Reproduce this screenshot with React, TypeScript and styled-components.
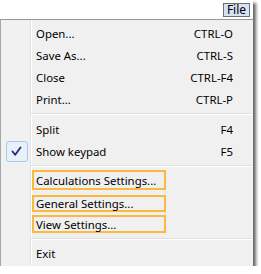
import React from "react";
import styled, { createGlobalStyle } from "styled-components";

const Global = createGlobalStyle`
  html, body { margin: 0; padding: 0; background: #ffffff; }
  body { font-family: "Noto Sans", "Open Sans", Arial, sans-serif; }
`;

const Shot = styled.div`
  width: 253px;
  background: #ffffff;
  box-shadow: 3px 3px 3px rgba(0, 0, 0, 0.6);
  display: flex;
  flex-direction: column;
`;

const TopStrip = styled.div`
  height: 19px;
  display: flex;
  justify-content: flex-end;
  align-items: flex-start;
  padding: 3px 3px 0 0;
  box-sizing: border-box;
`;

const FileButton = styled.div`
  width: 27px;
  height: 14px;
  box-sizing: border-box;
  border: 1px solid #6f6f6f;
  background: #d6e3f5;
  font-size: 12px;
  line-height: 12px;
  color: #000;
  display: flex;
  align-items: center;
  justify-content: center;
`;

const Menu = styled.div`
  border-top: 1px solid #979797;
  border-left: 1px solid #a7a7a7;
  padding: 2px 0 2px 0;
  display: flex;
  flex-direction: column;
  background: linear-gradient(
    to right,
    #f1f1f1 0 29px,
    #e2e3e3 29px 30px,
    #ffffff 30px 31px,
    #f0f0f0 31px
  );
`;

const Item = styled.div`
  height: 22px;
  display: grid;
  grid-template-columns: 30px 1fr auto;
  align-items: center;
  padding-right: 20px;
  font-size: 11.4px;
  color: #000;
`;

const Gutter = styled.div`
  height: 22px;
  display: flex;
  align-items: center;
  justify-content: center;
  padding-left: 1px;
`;

const CheckBox = styled.div`
  width: 22px;
  height: 21px;
  box-sizing: border-box;
  border: 1px solid #a9c7ea;
  border-radius: 3px;
  background: #e8f0fa;
  display: flex;
  align-items: center;
  justify-content: center;
`;

const Label = styled.div`
  padding-left: 5px;
  height: 22px;
  display: flex;
  align-items: center;
  white-space: nowrap;
`;

const Shortcut = styled.div`
  white-space: nowrap;
`;

const Highlight = styled.span<{ $top: number; $h: number }>`
  align-self: flex-start;
  margin-top: ${(p) => p.$top}px;
  margin-left: -4px;
  height: ${(p) => p.$h}px;
  width: 134px;
  box-sizing: border-box;
  border: 2px solid #fbb940;
  padding-left: 2px;
  display: flex;
  align-items: center;
`;

const Separator = styled.div<{ $h: number }>`
  height: ${(p) => p.$h}px;
  margin-left: 30px;
  display: flex;
  flex-direction: column;
  justify-content: center;
  &::before {
    content: "";
    height: 1px;
    background: #e0e0e0;
  }
  &::after {
    content: "";
    height: 1px;
    background: #ffffff;
  }
`;

const Check = () => (
  <svg width="11" height="11" viewBox="0 0 11 11">
    <path
      d="M1.5 5.5 L4.2 8.8 L9.5 1.5"
      fill="none"
      stroke="#1b2a80"
      strokeWidth="1.8"
      strokeLinecap="round"
      strokeLinejoin="round"
    />
  </svg>
);

type Row = {
  label: string;
  shortcut?: string;
  checked?: boolean;
  box?: { top: number; h: number };
};

const group1: Row[] = [
  { label: "Open...", shortcut: "CTRL-O" },
  { label: "Save As...", shortcut: "CTRL-S" },
  { label: "Close", shortcut: "CTRL-F4" },
  { label: "Print...", shortcut: "CTRL-P" },
];
const group2: Row[] = [
  { label: "Split", shortcut: "F4" },
  { label: "Show keypad", shortcut: "F5", checked: true },
];
const group3: Row[] = [
  { label: "Calculations Settings...", box: { top: 1, h: 20 } },
  { label: "General Settings...", box: { top: 4, h: 17 } },
  { label: "View Settings...", box: { top: 2, h: 18 } },
];
const group4: Row[] = [{ label: "Exit" }];

const groups: { sep: number; rows: Row[] }[] = [
  { sep: 0, rows: group1 },
  { sep: 8, rows: group2 },
  { sep: 7, rows: group3 },
  { sep: 7, rows: group4 },
];

const MenuRow = ({ row }: { row: Row }) => (
  <Item>
    <Gutter>
      {row.checked ? (
        <CheckBox>
          <Check />
        </CheckBox>
      ) : null}
    </Gutter>
    <Label>
      {row.box ? (
        <Highlight $top={row.box.top} $h={row.box.h}>
          {row.label}
        </Highlight>
      ) : (
        row.label
      )}
    </Label>
    <Shortcut>{row.shortcut}</Shortcut>
  </Item>
);

export default function App() {
  return (
    <>
      <Global />
      <Shot>
        <TopStrip>
          <FileButton>File</FileButton>
        </TopStrip>
        <Menu>
          {groups.map((g, gi) => (
            <React.Fragment key={gi}>
              {g.sep > 0 && <Separator $h={g.sep} />}
              {g.rows.map((r) => (
                <MenuRow key={r.label} row={r} />
              ))}
            </React.Fragment>
          ))}
        </Menu>
      </Shot>
    </>
  );
}
